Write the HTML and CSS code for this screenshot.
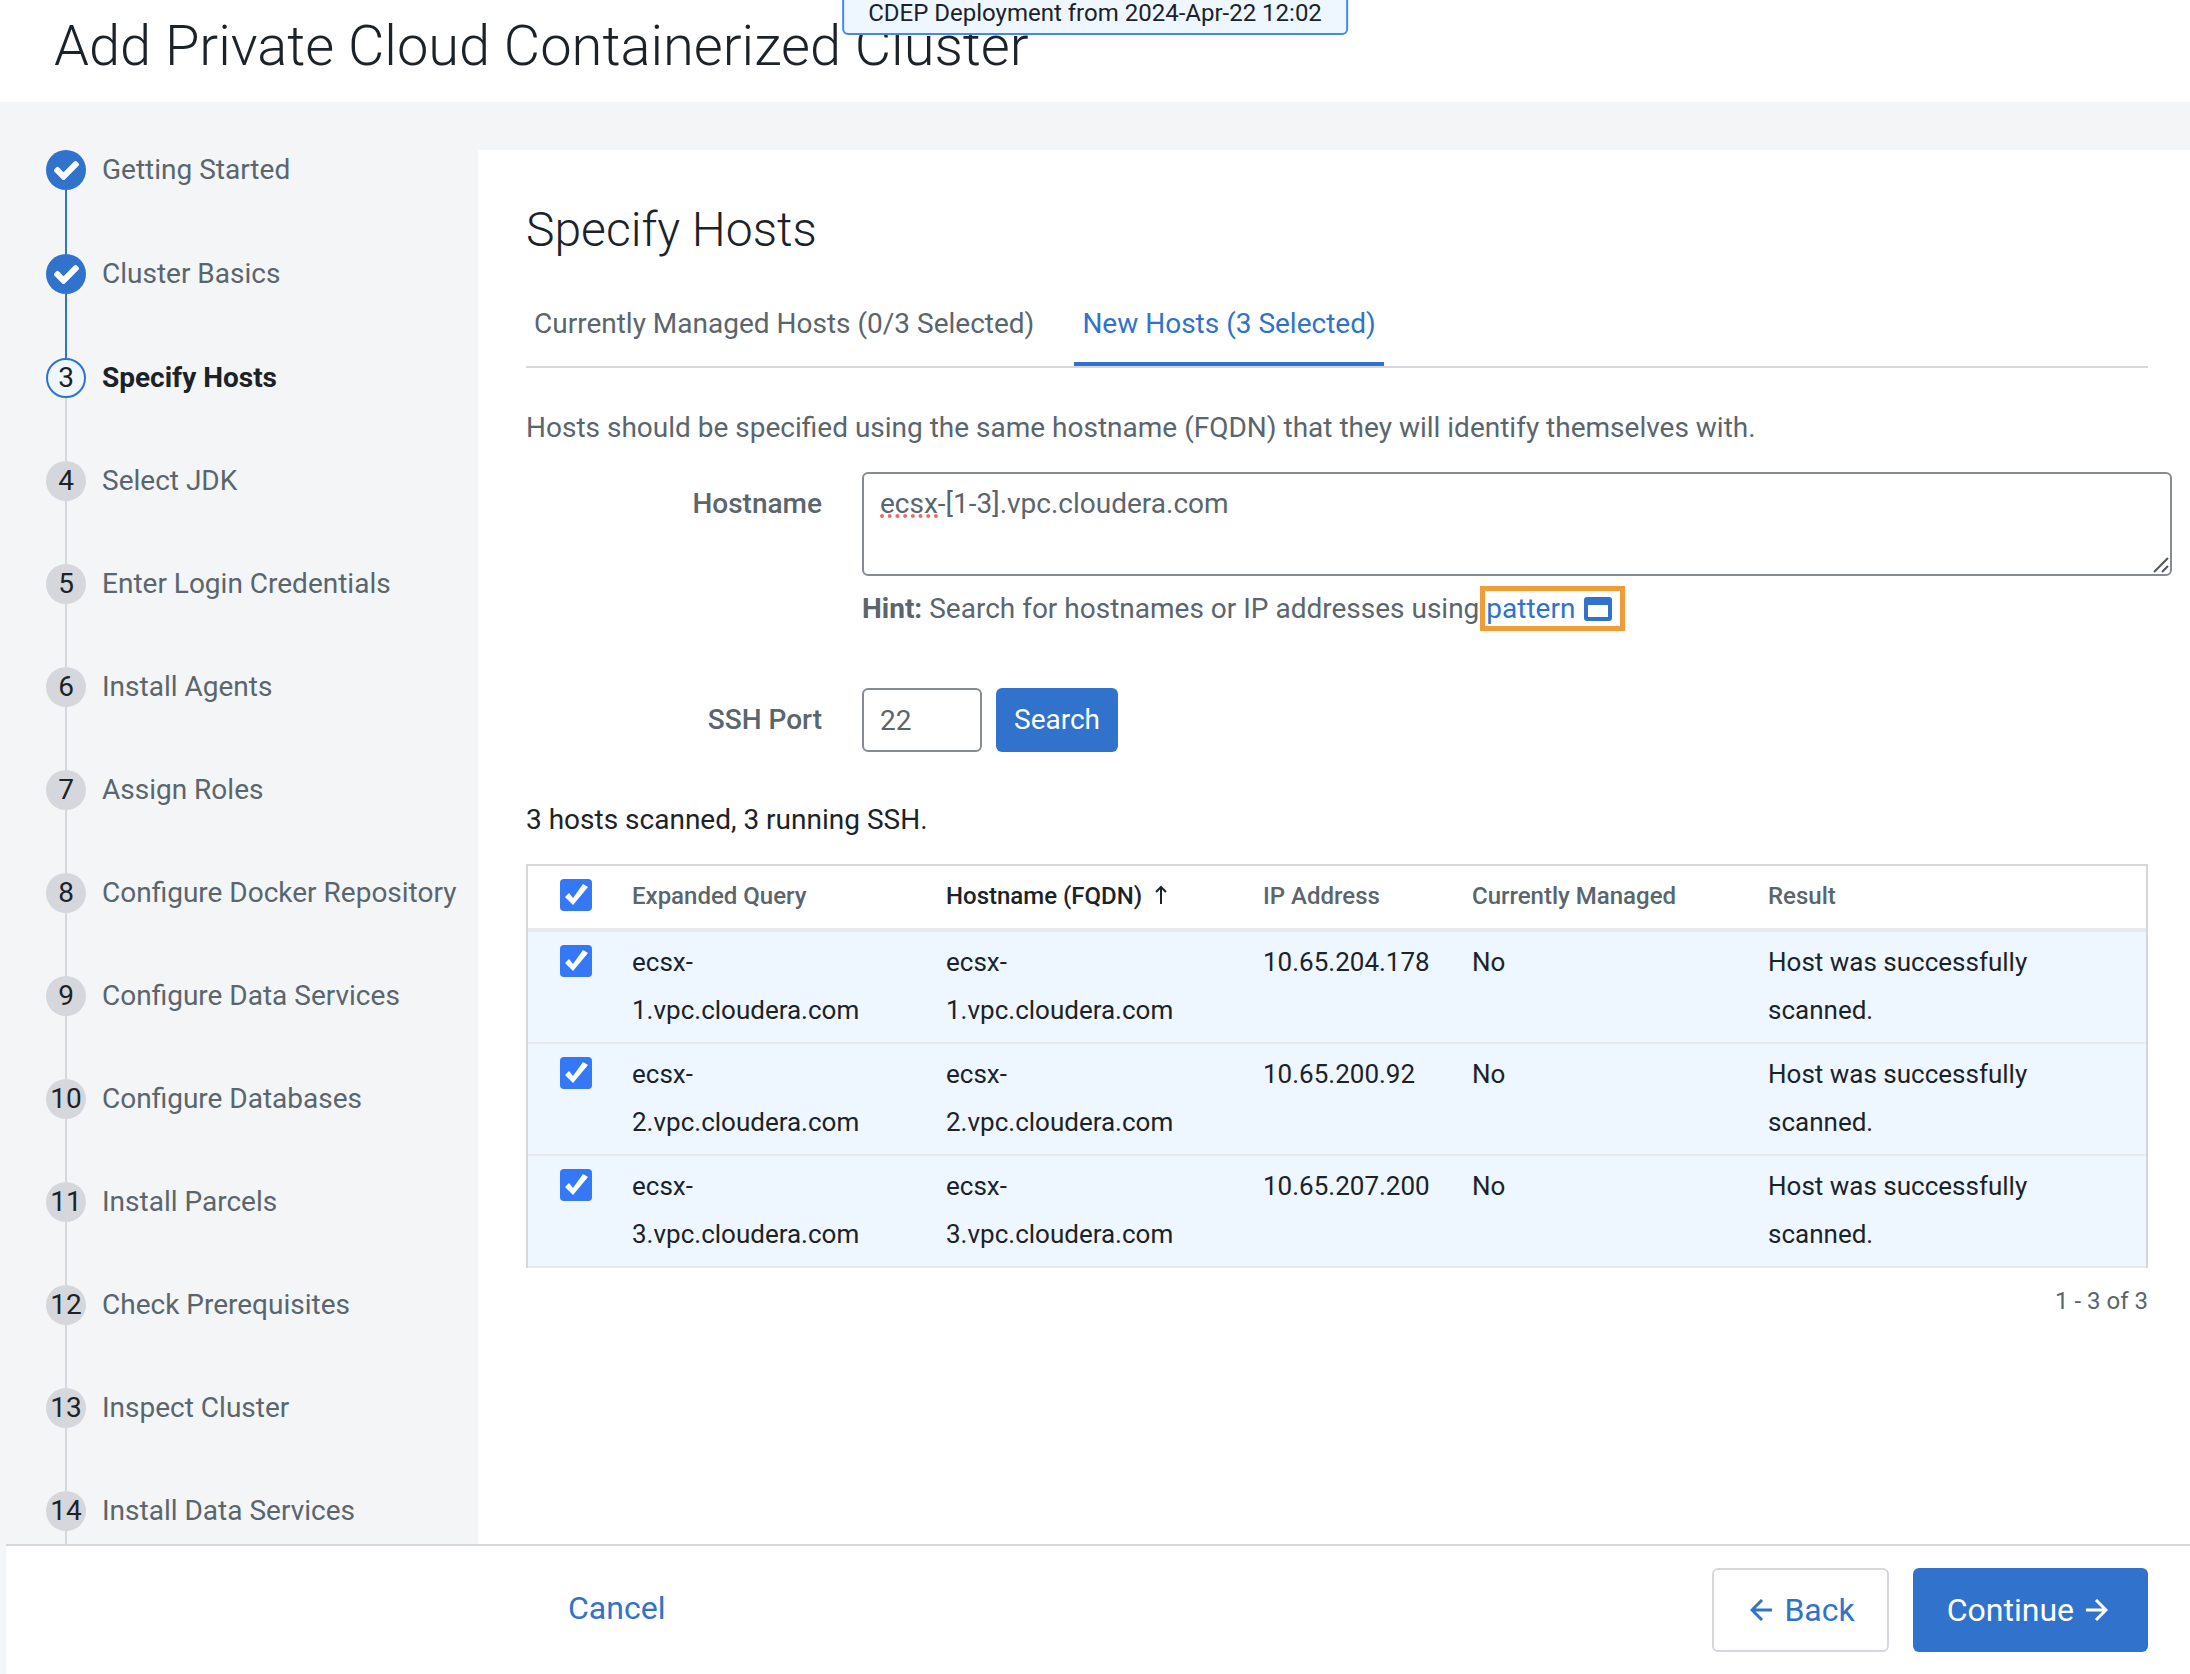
FILE: index.html
```html
<!DOCTYPE html>
<html lang="en">
<head>
    <meta charset="UTF-8">
    <meta name="viewport" content="width=device-width, initial-scale=1.0">
    <title>Add Private Cloud Containerized Cluster</title>
    <link rel="stylesheet" href="styles.css">
</head>
<body>
    <header class="page-header">
        <h1>Add Private Cloud Containerized Cluster</h1>
        <div class="banner">CDEP Deployment from 2024-Apr-22 12:02</div>
    </header>

    <div class="wizard">
        <nav class="sidebar">
            <ol class="steps">
                <li class="step done">
                    <span class="step-icon">
                        <svg viewBox="-14 -14 540 540"><path d="M173.9 439.4l-166.4-166.4c-10-10-10-26.2 0-36.2l36.2-36.2c10-10 26.2-10 36.2 0L192 312.7 432.1 72.6c10-10 26.2-10 36.2 0l36.2 36.2c10 10 10 26.2 0 36.2l-294.4 294.4c-10 10-26.2 10-36.2 0z"/></svg>
                    </span>
                    <span class="step-label">Getting Started</span>
                </li>
                <li class="step done">
                    <span class="step-icon">
                        <svg viewBox="-14 -14 540 540"><path d="M173.9 439.4l-166.4-166.4c-10-10-10-26.2 0-36.2l36.2-36.2c10-10 26.2-10 36.2 0L192 312.7 432.1 72.6c10-10 26.2-10 36.2 0l36.2 36.2c10 10 10 26.2 0 36.2l-294.4 294.4c-10 10-26.2 10-36.2 0z"/></svg>
                    </span>
                    <span class="step-label">Cluster Basics</span>
                </li>
                <li class="step current"><span class="step-icon">3</span><span class="step-label">Specify Hosts</span></li>
                <li class="step"><span class="step-icon">4</span><span class="step-label">Select JDK</span></li>
                <li class="step"><span class="step-icon">5</span><span class="step-label">Enter Login Credentials</span></li>
                <li class="step"><span class="step-icon">6</span><span class="step-label">Install Agents</span></li>
                <li class="step"><span class="step-icon">7</span><span class="step-label">Assign Roles</span></li>
                <li class="step"><span class="step-icon">8</span><span class="step-label">Configure Docker Repository</span></li>
                <li class="step"><span class="step-icon">9</span><span class="step-label">Configure Data Services</span></li>
                <li class="step"><span class="step-icon">10</span><span class="step-label">Configure Databases</span></li>
                <li class="step"><span class="step-icon">11</span><span class="step-label">Install Parcels</span></li>
                <li class="step"><span class="step-icon">12</span><span class="step-label">Check Prerequisites</span></li>
                <li class="step"><span class="step-icon">13</span><span class="step-label">Inspect Cluster</span></li>
                <li class="step"><span class="step-icon">14</span><span class="step-label">Install Data Services</span></li>
            </ol>
        </nav>

        <main class="content">
            <h2>Specify Hosts</h2>

            <div class="tabs" role="tablist">
                <button type="button" class="tab" role="tab">Currently Managed Hosts (0/3 Selected)</button>
                <button type="button" class="tab active" role="tab" aria-selected="true">New Hosts (3 Selected)</button>
            </div>

            <p class="intro">Hosts should be specified using the same hostname (FQDN) that they will identify themselves with.</p>

            <form class="host-form">
                <label for="hostname">Hostname</label>
                <div class="field">
                    <div class="hostname-box">
                        <textarea id="hostname">ecsx-[1-3].vpc.cloudera.com</textarea>
                        <span class="spelling" aria-hidden="true"></span>
                        <svg class="resizer" viewBox="0 0 16 16"><path d="M1 15L15 1M9 15L15 9"/></svg>
                    </div>
                    <p class="hint"><strong>Hint:</strong> Search for hostnames or IP addresses using<a class="pattern" href="#">pattern
                        <svg viewBox="0 0 28 24"><path fill-rule="evenodd" d="M3 0H25a3 3 0 0 1 3 3V21a3 3 0 0 1-3 3H3a3 3 0 0 1-3-3V3a3 3 0 0 1 3-3zM4 8V20H24V8z"/></svg></a></p>
                </div>
                <label for="ssh-port">SSH Port</label>
                <div class="port-row">
                    <input type="text" id="ssh-port" value="22">
                    <button type="button" class="search">Search</button>
                </div>
            </form>

            <p class="summary">3 hosts scanned, 3 running SSH.</p>

            <table class="hosts">
                <colgroup>
                    <col class="col-check">
                    <col class="col-query">
                    <col class="col-host">
                    <col class="col-ip">
                    <col class="col-managed">
                    <col>
                </colgroup>
                <thead>
                    <tr>
                        <th><input type="checkbox" aria-label="Select all hosts" checked></th>
                        <th>Expanded Query</th>
                        <th class="sorted">Hostname (FQDN)
                            <svg viewBox="0 0 14 20"><path d="M7 20V3M2 8L7 3L12 8"/></svg></th>
                        <th>IP Address</th>
                        <th>Currently Managed</th>
                        <th>Result</th>
                    </tr>
                </thead>
                <tbody>
                    <tr>
                        <td><input type="checkbox" aria-label="Select ecsx-1" checked></td>
                        <td>ecsx-1.vpc.cloudera.com</td>
                        <td>ecsx-1.vpc.cloudera.com</td>
                        <td>10.65.204.178</td>
                        <td>No</td>
                        <td>Host was successfully scanned.</td>
                    </tr>
                    <tr>
                        <td><input type="checkbox" aria-label="Select ecsx-2" checked></td>
                        <td>ecsx-2.vpc.cloudera.com</td>
                        <td>ecsx-2.vpc.cloudera.com</td>
                        <td>10.65.200.92</td>
                        <td>No</td>
                        <td>Host was successfully scanned.</td>
                    </tr>
                    <tr>
                        <td><input type="checkbox" aria-label="Select ecsx-3" checked></td>
                        <td>ecsx-3.vpc.cloudera.com</td>
                        <td>ecsx-3.vpc.cloudera.com</td>
                        <td>10.65.207.200</td>
                        <td>No</td>
                        <td>Host was successfully scanned.</td>
                    </tr>
                </tbody>
            </table>
            <p class="paging">1 - 3 of 3</p>
        </main>
    </div>

    <footer class="actions">
        <button type="button" class="cancel">Cancel</button>
        <div class="action-buttons">
            <button type="button" class="back">
                <svg viewBox="0 0 22 22"><path d="M22 11H2M12 1L2 11L12 21"/></svg>
                Back
            </button>
            <button type="button" class="continue">
                Continue
                <svg viewBox="0 0 22 22"><path d="M0 11H20M10 1L20 11L10 21"/></svg>
            </button>
        </div>
    </footer>
</body>
</html>
```
FILE: styles.css
```css
:root {
    --blue: #3072cc;
    --text: #1b2329;
    --muted: #5a656d;
    --line: #d5d7dc;
    --line-light: #e7eaed;
    --page-bg: #f3f5f7;
    --selected-bg: #eef6ff;
}

* {
    margin: 0;
    padding: 0;
    box-sizing: border-box;
}

body {
    display: flex;
    flex-direction: column;
    height: 100vh;
    overflow: hidden;
    background: var(--page-bg);
    color: var(--text);
    font-family: Roboto, sans-serif;
    font-size: 28px;
    line-height: 40px;
}

button,
input,
textarea {
    font: inherit;
    color: inherit;
}

button {
    border: none;
    background: none;
    cursor: pointer;
}

svg {
    fill: none;
    stroke: currentColor;
    stroke-width: 2;
}

/* Header */
.page-header {
    position: relative;
    flex: none;
    padding: 12px 54px 22px;
    background: #fff;
}

h1 {
    font-size: 56px;
    font-weight: 300;
    line-height: 68px;
}

.banner {
    position: absolute;
    top: -10px;
    left: 50%;
    transform: translateX(-50%);
    padding: 1px 24px 0;
    border: 2px solid #4389f0;
    border-radius: 6px;
    background: var(--selected-bg);
    font-size: 24px;
    white-space: nowrap;
}

/* Steps */
.wizard {
    display: flex;
    flex: 1;
    min-height: 0;
    padding-top: 48px;
    overflow: hidden;
}

.sidebar {
    flex: none;
    width: 478px;
    padding-left: 46px;
}

.steps {
    list-style: none;
}

.step {
    display: grid;
    grid-template-columns: 40px auto;
    grid-template-rows: 40px 63px;
    column-gap: 16px;
    color: var(--muted);
}

/* connector to the next step */
.step::after {
    content: "";
    grid-column: 1;
    justify-self: center;
    width: 2px;
    background: var(--line);
}

.step-icon {
    display: flex;
    align-items: center;
    justify-content: center;
    border-radius: 50%;
    background: var(--line);
    color: var(--text);
}

.step.done {
    grid-template-rows: 40px 64px;
}

.step.done .step-icon,
.step.done::after {
    background: var(--blue);
}

.step-icon svg {
    width: 25px;
    height: 25px;
    fill: #fff;
    stroke: #fff;
    stroke-width: 28;
}

.step.current .step-icon {
    border: 2px solid var(--blue);
    background: var(--selected-bg);
}

.step.current .step-label {
    color: var(--text);
    font-weight: 700;
}

/* Content */
.content {
    flex: 1;
    min-width: 0;
    padding: 48px 42px 0 48px;
    background: #fff;
}

h2 {
    margin-bottom: 32px;
    font-size: 48px;
    font-weight: 300;
    line-height: 64px;
}

.tabs {
    display: flex;
    gap: 32px;
    margin-bottom: 40px;
    border-bottom: 2px solid var(--line);
}

.tab {
    padding: 10px 8px 18px;
    border-bottom: 4px solid transparent;
    color: var(--muted);
}

.tab.active {
    border-color: var(--blue);
    color: var(--blue);
}

.intro {
    margin-bottom: 24px;
    color: var(--muted);
}

.host-form {
    display: grid;
    grid-template-columns: 296px 1fr;
    column-gap: 40px;
    color: var(--muted);
}

.host-form label {
    padding-top: 12px;
    font-weight: 500;
    text-align: right;
}

.hostname-box {
    position: relative;
    height: 104px;
    margin-right: -24px;
}

.hostname-box textarea {
    display: block;
    width: 100%;
    height: 100%;
    padding: 10px 16px;
    border: 2px solid #868a94;
    border-radius: 6px;
    background: #fff;
    resize: none;
}

.spelling {
    position: absolute;
    top: 42px;
    left: 18px;
    width: 58px;
    border-bottom: 4px dotted #ee6a63;
}

.resizer {
    position: absolute;
    right: 3px;
    bottom: 3px;
    width: 16px;
    height: 16px;
    color: #555;
}

.hint {
    display: flex;
    align-items: center;
    margin: 10px 0 57px;
    white-space: pre;
}

.pattern {
    display: flex;
    align-items: center;
    gap: 9px;
    margin-left: 1px;
    padding: 0 8px 0 1px;
    border: 5px solid #f09c38;
    color: var(--blue);
    line-height: 35px;
    text-decoration: none;
    white-space: normal;
}

.pattern svg {
    width: 28px;
    height: 24px;
    fill: currentColor;
    stroke: none;
}

.port-row {
    display: flex;
    gap: 14px;
}

.port-row input {
    width: 120px;
    height: 64px;
    padding: 0 16px;
    border: 2px solid #868a94;
    border-radius: 6px;
}

.search {
    padding: 0 18px;
    border-radius: 6px;
    background: var(--blue);
    color: #fff;
}

.summary {
    margin: 48px 0 24px;
}

/* Hosts table */
.hosts {
    width: 100%;
    table-layout: fixed;
    border: 2px solid var(--line);
    border-bottom: none;
    border-spacing: 0;
    font-size: 26px;
    line-height: 48px;
}

.col-check {
    width: 88px;
}

.col-query {
    width: 314px;
}

.col-host {
    width: 317px;
}

.col-ip {
    width: 209px;
}

.col-managed {
    width: 296px;
}

.hosts th {
    height: 66px;
    padding: 0 16px 2px;
    border-bottom: 4px solid var(--line-light);
    color: var(--muted);
    font-size: 24px;
    font-weight: 500;
    text-align: left;
    white-space: nowrap;
}

.hosts th.sorted {
    color: var(--text);
}

.hosts th svg {
    width: 14px;
    height: 20px;
    margin-left: 6px;
}

.hosts td {
    padding: 6px 16px 8px;
    border-bottom: 2px solid var(--line-light);
    background: var(--selected-bg);
    vertical-align: top;
}

.hosts th:first-child,
.hosts td:first-child {
    padding-left: 32px;
}

.hosts input {
    display: block;
    width: 32px;
    height: 32px;
    margin-bottom: 2px;
    appearance: none;
    border-radius: 4px;
    background: #3478f6;
}

.hosts td input {
    margin-top: 7px;
}

/* tick mark */
.hosts input:checked::before {
    content: "";
    display: block;
    height: 32px;
    background: #fff;
    clip-path: polygon(5px 18px, 9px 14px, 13px 19px, 23px 5px, 28px 8px, 13px 26px);
}

.paging {
    margin-top: 13px;
    color: var(--muted);
    font-size: 24px;
    text-align: right;
}

/* Footer */
.actions {
    display: flex;
    flex: none;
    align-items: center;
    justify-content: space-between;
    height: 130px;
    margin-left: 6px;
    padding: 0 42px 0 562px;
    border-top: 2px solid var(--line);
    background: #fff;
    font-size: 32px;
}

.cancel {
    margin-bottom: 4px;
    color: var(--blue);
}

.action-buttons {
    display: flex;
    gap: 24px;
}

.back,
.continue {
    display: flex;
    align-items: center;
    gap: 12px;
    height: 84px;
    border-radius: 6px;
}

.back {
    padding: 0 32px 0 36px;
    border: 2px solid var(--line);
    color: var(--blue);
}

.continue {
    padding: 0 40px 0 34px;
    background: var(--blue);
    color: #fff;
}

.actions svg {
    width: 22px;
    height: 22px;
    stroke-width: 3;
}
```
